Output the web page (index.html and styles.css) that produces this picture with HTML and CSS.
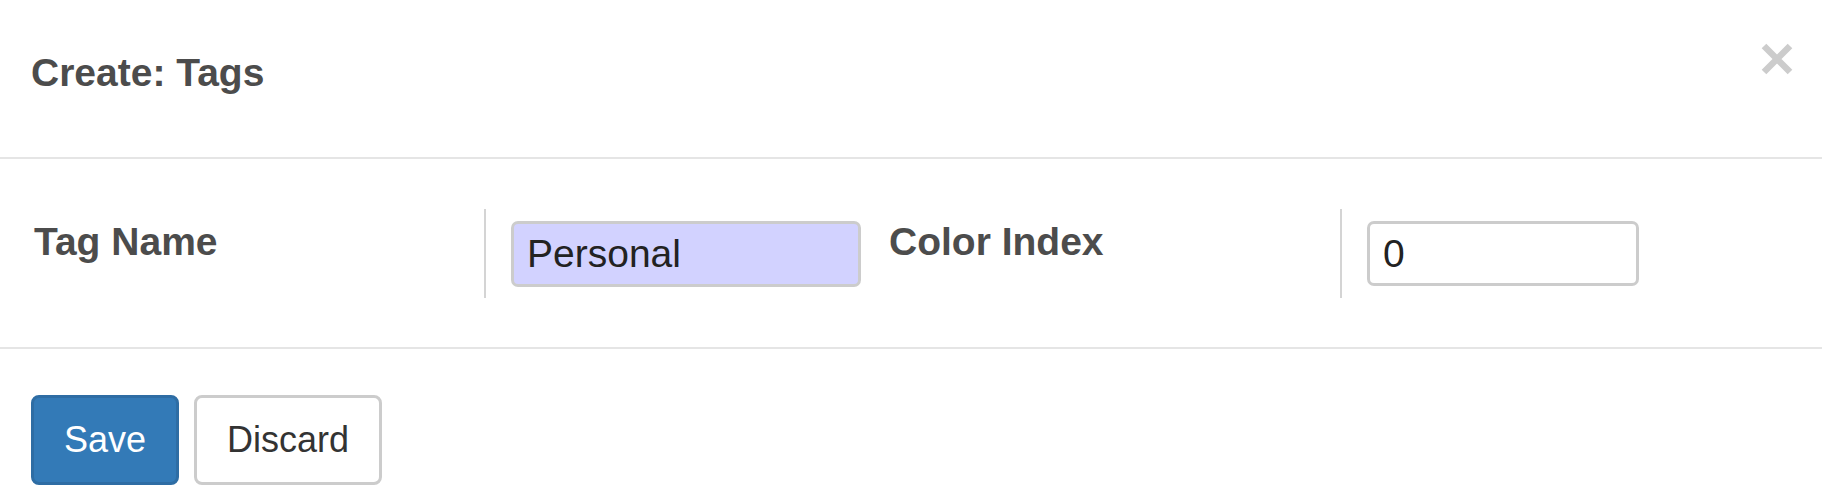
FILE: index.html
```html
<!DOCTYPE html>
<html>
<head>
<meta charset="utf-8">
<title>Create: Tags</title>
<link rel="stylesheet" href="styles.css">
</head>
<body>
<div class="modal">
  <header class="modal-header">
    <h4 class="modal-title">Create: Tags</h4>
    <button class="close" type="button" aria-label="Close">
      <svg width="32" height="32" viewBox="0 0 32 32"><path d="M3 3 L29 29 M29 3 L3 29" stroke="#cccccc" stroke-width="6.5" fill="none"/></svg>
    </button>
  </header>
  <section class="modal-body">
    <div class="form-grid">
      <div class="label-cell"><label>Tag Name</label></div>
      <div class="field-cell"><input class="field required name-field" type="text" value="Personal"></div>
      <div class="label-cell"><label>Color Index</label></div>
      <div class="field-cell"><input class="field color-field" type="text" value="0"></div>
    </div>
  </section>
  <footer class="modal-footer">
    <button class="btn btn-primary" type="button">Save</button>
    <button class="btn btn-default" type="button">Discard</button>
  </footer>
</div>
</body>
</html>
```
FILE: styles.css
```css
* {
  box-sizing: border-box;
}
html, body {
  margin: 0;
  padding: 0;
  background: #ffffff;
}
body {
  font-family: "Liberation Sans", Arial, sans-serif;
  color: #4c4c4c;
  width: 1822px;
  height: 497px;
  overflow: hidden;
}
.modal {
  display: flex;
  flex-direction: column;
}
.modal-header {
  height: 159px;
  padding: 46px 29px 0 31px;
  border-bottom: 2px solid #e5e5e5;
  display: flex;
  justify-content: space-between;
  align-items: flex-start;
}
.modal-title {
  margin: 0;
  font-size: 39px;
  line-height: 54px;
  font-weight: bold;
  color: #4c4c4c;
}
.close {
  border: 0;
  background: transparent;
  padding: 0;
  margin: -3px 0 0 0;
  width: 32px;
  height: 32px;
  cursor: pointer;
  display: block;
}
.close svg {
  display: block;
}
.modal-body {
  height: 190px;
  padding: 50px 32px 0 32px;
  border-bottom: 2px solid #e5e5e5;
}
.form-grid {
  display: grid;
  grid-template-columns: 454px 401px 455px 1fr;
  align-items: start;
}
.label-cell {
  height: 89px;
  border-right: 2px solid #d4d4d4;
  padding-top: 6px;
  padding-left: 2px;
}
.label-cell label {
  display: block;
  font-size: 39px;
  line-height: 54px;
  font-weight: bold;
  color: #4c4c4c;
}
.field-cell {
  padding: 12px 0 0 25px;
}
.field {
  display: block;
  font-family: "Liberation Sans", Arial, sans-serif;
  font-size: 39px;
  line-height: 60px;
  height: 66px;
  padding: 0 13px;
  border: 3px solid #cccccc;
  border-radius: 7px;
  color: #222222;
  background: #ffffff;
  outline: none;
}
.field.required {
  background: #d2d2ff;
}
.name-field {
  width: 350px;
}
.color-field {
  width: 272px;
  height: 65px;
}
.modal-footer {
  padding: 46px 31px 0 31px;
  display: flex;
  gap: 15px;
}
.btn {
  font-family: "Liberation Sans", Arial, sans-serif;
  font-size: 36px;
  line-height: 50px;
  height: 90px;
  padding: 17px 30px;
  border: 3px solid transparent;
  border-radius: 8px;
  cursor: pointer;
}
.btn-primary {
  background: #337ab7;
  border-color: #2e6da4;
  color: #ffffff;
}
.btn-default {
  background: #ffffff;
  border-color: #cccccc;
  color: #333333;
}
```
